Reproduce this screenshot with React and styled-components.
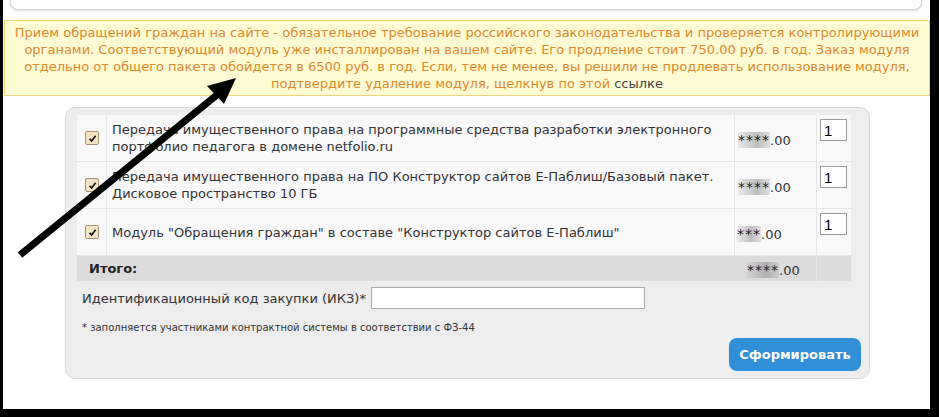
import React from 'react';
import styled, { createGlobalStyle } from 'styled-components';

const GlobalStyle = createGlobalStyle`
  html, body {
    margin: 0;
    padding: 0;
    background: #000;
  }
  body {
    font-family: "DejaVu Sans", Verdana, sans-serif;
  }
`;

const Frame = styled.div`
  width: 939px;
  height: 417px;
  box-sizing: border-box;
  padding: 0 9px 8px 3px;
  background: #000;
`;

const Page = styled.div`
  position: relative;
  height: 100%;
  background: #fff;
  overflow: hidden;
`;

const PrevPanel = styled.div`
  height: 9px;
  margin: 0 8px 0 7px;
  background: #fff;
  border: 1px solid #d4d4d4;
  border-top: none;
  border-radius: 0 0 8px 8px;
  box-shadow: 0 1px 2px rgba(0, 0, 0, 0.15);
`;

const Notice = styled.div`
  margin: 10px 0 0 1px;
  padding: 3px 6px;
  background: #fffbd3;
  border: 1px solid #ecd27a;
  color: #dc8a2c;
  font-size: 13px;
  line-height: 17px;
  text-align: center;
`;

const NoticeLink = styled.a`
  color: #444;
  text-decoration: none;
`;

const Panel = styled.div`
  margin: 11px 0 0 62px;
  width: 805px;
  height: 272px;
  box-sizing: border-box;
  padding: 7px 18px 0 11px;
  background: #ededed;
  border: 1px solid #d8d8d8;
  border-radius: 10px;
`;

const Table = styled.div`
  display: grid;
  grid-template-columns: 30px 628px 82px 34px;
  width: 774px;
`;

const Cell = styled.div`
  display: flex;
  align-items: ${p => (p.$top ? 'flex-start' : 'center')};
  height: ${p => (p.$total ? '25px' : '47px')};
  box-sizing: border-box;
  background: ${p => (p.$total ? '#dcdcdc' : '#f9f9f9')};
  border-bottom: ${p => (p.$total ? 'none' : '1px solid #e6e6e6')};
  border-right: ${p => (p.$last ? 'none' : '1px solid #e6e6e6')};
  color: #333;
  font-size: 13px;
  line-height: 17px;
  padding: ${p => p.$pad || '0'};
`;

const Check = styled.span`
  display: inline-flex;
  align-items: center;
  justify-content: center;
  width: 12px;
  height: 12px;
  margin-left: 8px;
  background: #f3e4c4;
  border: 1px solid #a89374;
  border-radius: 2px;
`;

const Stars = styled.span`
  font-size: 14px;
  letter-spacing: 1px;
  color: #222;
  background: linear-gradient(90deg, rgba(150,150,150,0.15), rgba(140,140,140,0.55) 60%, rgba(170,170,170,0.3));
`;

const Price = styled.span`
  color: #333;
  font-size: 13px;
  margin-top: 4px;
`;

const Qty = styled.input`
  width: 27px;
  height: 22px;
  box-sizing: border-box;
  margin-top: 4px;
  margin-left: 3px;
  padding: 0 3px;
  border: 1px solid #9a9a9a;
  background: #fff;
  font-family: "Liberation Sans", Arial, sans-serif;
  font-size: 15px;
  line-height: 18px;
  color: #000;
  vertical-align: top;
`;

const TotalLabel = styled.span`
  font-weight: bold;
  margin-left: 12px;
  color: #222;
`;

const CodeRow = styled.div`
  display: flex;
  align-items: center;
  gap: 5px;
  margin: 6px 0 0 5px;
  font-size: 13px;
  color: #333;
`;

const CodeInput = styled.input`
  width: 274px;
  height: 22px;
  box-sizing: border-box;
  border: 1px solid #aaa;
  background: #fff;
`;

const Note = styled.div`
  margin: 13px 0 0 5px;
  font-size: 10px;
  color: #333;
`;

const ButtonRow = styled.div`
  display: flex;
  justify-content: flex-end;
  margin-top: 5px;
`;

const Button = styled.button`
  width: 132px;
  height: 33px;
  margin-right: -10px;
  border: none;
  border-radius: 8px;
  background: #2f8fd8;
  color: #fff;
  font-family: "DejaVu Sans", Verdana, sans-serif;
  font-weight: bold;
  font-size: 13px;
`;

const Arrow = styled.svg`
  position: absolute;
  left: 0;
  top: 0;
  pointer-events: none;
`;

const CheckMark = () => (
  <svg width="9" height="9" viewBox="0 0 9 9">
    <path d="M1.5 4.8 L3.6 7 L7.6 1.8" fill="none" stroke="#111" strokeWidth="1.6" />
  </svg>
);

const items = [
  {
    text: 'Передача имущественного права на программные средства разработки электронного портфолио педагога в домене netfolio.ru',
    stars: '****',
  },
  {
    text: 'Передача имущественного права на ПО Конструктор сайтов Е-Паблиш/Базовый пакет. Дисковое пространство 10 ГБ',
    stars: '****',
  },
  {
    text: 'Модуль "Обращения граждан" в составе "Конструктор сайтов Е-Паблиш"',
    stars: '***',
  },
];

export default function App() {
  return (
    <Frame>
      <GlobalStyle />
      <Page>
        <PrevPanel />
        <Notice>
          Прием обращений граждан на сайте - обязательное требование российского законодательства и проверяется контролирующими
          органами. Соответствующий модуль уже инсталлирован на вашем сайте. Его продление стоит 750.00 руб. в год. Заказ модуля
          отдельно от общего пакета обойдется в 6500 руб. в год. Если, тем не менее, вы решили не продлевать использование модуля,
          подтвердите удаление модуля, щелкнув по этой <NoticeLink href="#">ссылке</NoticeLink>
        </Notice>
        <Panel>
          <Table>
            {items.map((item, index) => (
              <React.Fragment key={index}>
                <Cell>
                  <Check><CheckMark /></Check>
                </Cell>
                <Cell $pad="0 0 0 5px">{item.text}</Cell>
                <Cell $pad={item.stars.length === 4 ? '0 0 0 3px' : '0 0 0 2px'}>
                  <Price><Stars>{item.stars}</Stars>.00</Price>
                </Cell>
                <Cell $top $last>
                  <Qty defaultValue="1" />
                </Cell>
              </React.Fragment>
            ))}
            <Cell $total $last style={{ gridColumn: 'span 2' }}>
              <TotalLabel>Итого:</TotalLabel>
            </Cell>
            <Cell $total $pad="0 0 0 12px">
              <Price><Stars>****</Stars>.00</Price>
            </Cell>
            <Cell $total $last />
          </Table>
          <CodeRow>
            Идентификационный код закупки (ИКЗ)*
            <CodeInput />
          </CodeRow>
          <Note>* заполняется участниками контрактной системы в соответствии с ФЗ-44</Note>
          <ButtonRow>
            <Button>Сформировать</Button>
          </ButtonRow>
        </Panel>
        <Arrow width="927" height="409">
          <line x1="17" y1="255" x2="220" y2="90" stroke="#000" strokeWidth="7" />
          <polygon points="233,78 204,86 221,104" fill="#000" />
        </Arrow>
      </Page>
    </Frame>
  );
}
